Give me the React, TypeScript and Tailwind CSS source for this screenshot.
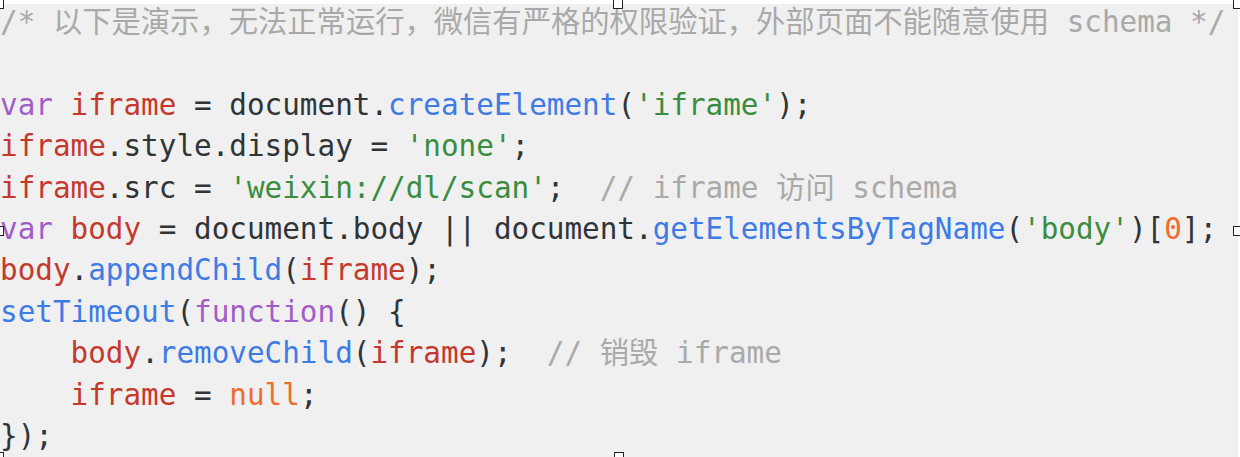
import React from "react";

type Tok = [string, string];

const C = {
  com: "text-[#a9a9a9]",
  kw: "text-[#a15dc7]",
  vr: "text-[#c4392d]",
  tx: "text-[#2f3437]",
  fn: "text-[#3f7be4]",
  st: "text-[#3a8d3f]",
  nm: "text-[#ee6d2d]",
};

const lines: Tok[][] = [
  [[C.com, "/* 以下是演示，无法正常运行，微信有严格的权限验证，外部页面不能随意使用 schema */"]],
  [],
  [
    [C.kw, "var"],
    [C.tx, " "],
    [C.vr, "iframe"],
    [C.tx, " = document."],
    [C.fn, "createElement"],
    [C.tx, "("],
    [C.st, "'iframe'"],
    [C.tx, ");"],
  ],
  [
    [C.vr, "iframe"],
    [C.tx, ".style.display = "],
    [C.st, "'none'"],
    [C.tx, ";"],
  ],
  [
    [C.vr, "iframe"],
    [C.tx, ".src = "],
    [C.st, "'weixin://dl/scan'"],
    [C.tx, ";  "],
    [C.com, "// iframe 访问 schema"],
  ],
  [
    [C.kw, "var"],
    [C.tx, " "],
    [C.vr, "body"],
    [C.tx, " = document.body || document."],
    [C.fn, "getElementsByTagName"],
    [C.tx, "("],
    [C.st, "'body'"],
    [C.tx, ")["],
    [C.nm, "0"],
    [C.tx, "];"],
  ],
  [
    [C.vr, "body"],
    [C.tx, "."],
    [C.fn, "appendChild"],
    [C.tx, "("],
    [C.vr, "iframe"],
    [C.tx, ");"],
  ],
  [
    [C.fn, "setTimeout"],
    [C.tx, "("],
    [C.kw, "function"],
    [C.tx, "() {"],
  ],
  [
    [C.tx, "    "],
    [C.vr, "body"],
    [C.tx, "."],
    [C.fn, "removeChild"],
    [C.tx, "("],
    [C.vr, "iframe"],
    [C.tx, ");  "],
    [C.com, "// 销毁 iframe"],
  ],
  [
    [C.tx, "    "],
    [C.vr, "iframe"],
    [C.tx, " = "],
    [C.nm, "null"],
    [C.tx, ";"],
  ],
  [[C.tx, "});"]],
];

// little selection squares sitting on the image border
function Handle({ className }: { className: string }) {
  return <span className={`absolute w-[10px] h-[10px] bg-white border border-[#222] ${className}`} />;
}

export default function App() {
  return (
    <div className="relative w-[1240px] h-[457px] bg-white overflow-hidden">
      <div className="flex flex-col mt-[4px] h-[453px] w-[1238px] bg-[#f0f0f0]">
        <pre
          className="flex flex-col m-0 -mt-[2px] text-[29.3px] leading-[41.4px] whitespace-pre"
          style={{ fontFamily: '"DejaVu Sans Mono", "Noto Sans CJK SC", monospace' }}
        >
          {lines.map((ln, i) => (
            <div key={i} className="h-[41.4px]">
              {ln.map(([cls, t], j) => (
                <span key={j} className={cls}>
                  {t}
                </span>
              ))}
            </div>
          ))}
        </pre>
      </div>

      <Handle className="-left-[6px] -top-[1px]" />
      <Handle className="left-[613px] -top-[1px]" />
      <Handle className="left-[1233px] -top-[1px]" />
      <Handle className="-left-[6px] top-[226px]" />
      <Handle className="left-[1233px] top-[226px]" />
      <Handle className="-left-[6px] top-[452px]" />
      <Handle className="left-[614px] top-[452px]" />
    </div>
  );
}
